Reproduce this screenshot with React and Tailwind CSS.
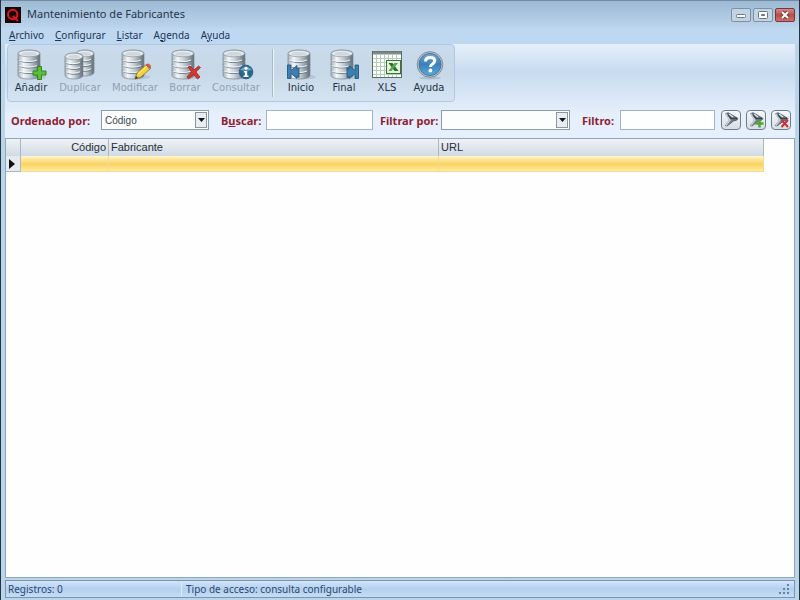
import React from "react";

function Cylinder({ x = 0, y = 0, w = 23, h = 29, id }) {
  const ry = 3.5;
  const step = (h - ry * 2) / 4;
  return (
    <g transform={`translate(${x} ${y})`}>
      <path
        d={`M0 ${ry} A${w / 2} ${ry} 0 0 1 ${w} ${ry} V${h - ry} A${w / 2} ${ry} 0 0 1 0 ${h - ry} Z`}
        fill={`url(#${id}-body)`}
        stroke="#7e8a93"
        strokeWidth="0.7"
      />
      {[1, 2, 3].map((n) => (
        <g key={n} fill="none">
          <path d={`M0 ${ry + step * n} A${w / 2} ${ry} 0 0 0 ${w} ${ry + step * n}`} stroke="#6f7c86" strokeWidth="1" />
          <path d={`M0.5 ${ry + step * n + 1} A${w / 2} ${ry} 0 0 0 ${w - 3} ${ry + step * n + 1}`} stroke="#f8fbfc" strokeWidth="0.9" />
        </g>
      ))}
      <ellipse cx={w / 2} cy={ry} rx={w / 2 - 0.3} ry={ry - 0.2} fill="#e9eef1" stroke="#87929a" strokeWidth="0.7" />
      <ellipse cx={w / 2} cy={ry + 0.3} rx={w / 2 - 3} ry={ry - 1.5} fill="#d0d8dd" />
    </g>
  );
}

function BodyGradient({ id }) {
  return (
    <defs>
      <linearGradient id={`${id}-body`}>
        <stop offset="0" stopColor="#a5b0b8" />
        <stop offset="0.25" stopColor="#f2f6f8" />
        <stop offset="0.5" stopColor="#cdd6dc" />
        <stop offset="0.75" stopColor="#98a5ae" />
        <stop offset="1" stopColor="#5f6c76" />
      </linearGradient>
    </defs>
  );
}

function DbIcon({ kind }) {
  const id = `db-${kind}`;
  return (
    <svg width="36" height="32" viewBox="0 0 36 32" aria-hidden="true">
      <BodyGradient id={id} />
      {kind === "copy" ? (
        <>
          <Cylinder x={14} y={1} w={18} h={26} id={id} />
          <Cylinder x={3} y={4} w={18} h={26} id={id} />
        </>
      ) : (
        <>
          <ellipse cx="20" cy="28" rx="13" ry="2.5" fill="#64788a" opacity="0.2" />
          <Cylinder x={5} y={1} w={22} h={29} id={id} />
        </>
      )}
      {kind === "add" && (
        <path d="M24.5 17.5h4v4.5h4.5v4h-4.5v4.5h-4v-4.5h-4.5v-4h4.5z" fill="#5cbd38" stroke="#2c8a1a" />
      )}
      {kind === "edit" && (
        <g>
          <path d="M18 30l2-6 10-9 4 4-10 9z" fill="#f3d33c" stroke="#8c7421" strokeWidth="0.8" />
          <path d="M28.5 16l2-1.5q3 0 3.5 3.5l-2 2z" fill="#cc5a50" />
          <path d="M21 25l9-8" stroke="#fff3a3" />
          <path d="M18 30l1-3 2 2z" fill="#333" />
        </g>
      )}
      {kind === "delete" && (
        <path d="M21 18l2-1 4 4 4.5-4 2 1.5-4.5 4.5 4 5-2.5 2-4-4.5-5 4.5-1.5-2 4.5-5z" fill="#d43830" stroke="#9d2020" strokeWidth="0.7" />
      )}
      {kind === "info" && (
        <g>
          <circle cx="28" cy="23" r="6.8" fill="#28688f" stroke="#2a6186" />
          <path d="M22 21q6-7 12 0q-6 1-12 0" fill="#6ba8ca" />
          <circle cx="28" cy="19.3" r="1.5" fill="#fff" />
          <path d="M25.8 22h3.4v4.5h1.3v1.5h-5v-1.5h1.4v-3h-1.1z" fill="#fff" />
        </g>
      )}
      {kind === "first" && (
        <path d="M4.5 16h3.5v5.5l6-5v4l2-2v10l-2-1v2l-6-5v5H4.5z" fill="#3d7fb1" stroke="#1c4f7a" strokeWidth="0.8" />
      )}
      {kind === "last" && (
        <path d="M32.5 16h-3.5v5.5l-6-5v4l-2-2v10l2-1v2l6-5v5h3.5z" fill="#3d7fb1" stroke="#1c4f7a" strokeWidth="0.8" />
      )}
    </svg>
  );
}

function XlsIcon() {
  return (
    <svg width="36" height="32" viewBox="0 0 36 32" aria-hidden="true">
      <rect x="3.5" y="2.5" width="29" height="26" fill="#fcfffb" stroke="#5c6d60" />
      <path d="M7.5 6v22M11.5 6v22M15.5 6v22M19.5 6v22M23.5 6v22M27.5 6v22M4 9.5h28M4 13.5h28M4 17.5h28M4 21.5h28M4 25.5h28" stroke="#b4cdb8" />
      <path d="M4 4h28" stroke="#7d8a87" strokeWidth="3" />
      <rect x="17.5" y="11.5" width="14" height="13" fill="#e5f2dc" stroke="#39703c" />
      <path d="M19.5 14h4l6 8h-4z" fill="#2b6d31" />
      <path d="M29 14h-3.500l-6 8h3z" fill="#56a451" />
    </svg>
  );
}

function HelpIcon() {
  return (
    <svg width="36" height="32" viewBox="0 0 36 32" aria-hidden="true">
      <defs>
        <linearGradient id="help-fill" x2="0" y2="1">
          <stop stopColor="#6fabd8" />
          <stop offset="0.5" stopColor="#3a80bd" />
          <stop offset="1" stopColor="#55aee2" />
        </linearGradient>
      </defs>
      <ellipse cx="19" cy="29" rx="11" ry="1.5" fill="#71808c" opacity="0.3" />
      <circle cx="19" cy="15.500" r="12.800" fill="#b9c5ce" stroke="#7c8b97" />
      <circle cx="19" cy="15.500" r="11" fill="url(#help-fill)" stroke="#4b7292" />
      <path d="M14.500 12.500q0-4 4.700-4 4.500 0 4.500 3.300 0 2-2.500 3.400-1.700 1-1.700 2.800" fill="none" stroke="#fff" strokeWidth="3" />
      <circle cx="19.400" cy="21.500" r="1.900" fill="#fff" />
    </svg>
  );
}

function FilterIcon({ kind }) {
  return (
    <svg width="18" height="18" viewBox="0 0 18 18" aria-hidden="true">
      <path d="M3.500 2.500q3-1.500 5 .5l7.500 4.500q-.5 2-4.500 2.500L5 15l-1.500-.5L7.500 9z" fill="#77828b" stroke="#48535d" strokeWidth="0.8" />
      <path d="M3.500 2.500l4.500 6.500-4 5.500" fill="none" stroke="#c9d1d6" strokeWidth="1.400" />
      <path d="M6 3.500l3 4 6 0" fill="none" stroke="#39434c" strokeWidth="1.300" />
      <path d="M7 3l4 3" stroke="#e6ebee" strokeWidth="1.200" />
      {kind === "add" && <path d="M12.500 8.500v8M8.500 12.500h8" stroke="#4ba832" strokeWidth="2.500" />}
      {kind === "remove" && <path d="M9.500 9l6.500 7M16 9l-6.500 7" stroke="#cb2d32" strokeWidth="2" />}
    </svg>
  );
}

const menus = [
  ["", "A", "rchivo"],
  ["", "C", "onfigurar"],
  ["", "L", "istar"],
  ["A", "g", "enda"],
  ["A", "y", "uda"],
];

function ToolButton({ label, width, disabled, children }) {
  return (
    <button type="button" disabled={disabled} className={`flex flex-col items-center ${width} ${disabled ? "text-[#92a0ae]" : "text-[#263445]"}`}>
      {children}
      <span>{label}</span>
    </button>
  );
}

function Combo({ id, width, value }) {
  return (
    <div className={`relative h-5 ${width}`}>
      <select id={id} defaultValue={value} className="block h-full w-full appearance-none border border-[#8c9bab] bg-[#fcfefe] pr-4 pl-[3px] font-['Liberation_Sans',sans-serif] text-[10px] text-[#394751]">
        <option value={value}>{value}</option>
      </select>
      <span className="pointer-events-none absolute top-0.5 right-0.5 flex h-4 w-3 items-center justify-center border border-[#8c969e] bg-[#e9edef]">
        <svg width="7" height="4" viewBox="0 0 7 4" aria-hidden="true"><path d="M0 0h7L3.5 4z" fill="#101820" /></svg>
      </span>
    </div>
  );
}

const labelStyle = "shrink-0 pt-0.5 text-[11px] font-bold text-[#8f1e35]";
const fieldStyle = "h-5 border border-[#a4b4c7] bg-[#fdfefe] px-1 text-[10px]";
const filterButton = "flex h-5 w-5 items-center justify-center rounded-sm border border-[#707d88] bg-linear-to-b from-[#f7f9fb] to-[#d5dde5]";
const headCell = "border-r border-[#aab7c5] font-normal";
const captionButton = "flex h-3.5 w-5 items-center justify-center rounded-xs border";

export default function App() {
  return (
    <div className="flex h-screen min-h-80 w-full flex-col overflow-hidden border-x border-[#26343e] bg-[#bad4e9] font-['Noto_Sans',sans-serif] text-[10px] text-[#26364c]">
      <header className="flex h-7 shrink-0 items-center gap-1 border-t border-[#758ba0] bg-linear-to-b from-[#9dbad4] to-[#bcd4ec] pr-1 pl-1">
        <svg width="16" height="16" viewBox="0 0 16 16" aria-hidden="true">
          <path fill="#160607" d="M0 0h16v16H0z" />
          <ellipse cx="7.7" cy="7.5" rx="4.7" ry="4.8" fill="none" stroke="#dd1721" strokeWidth="2" />
          <path d="M8 9l5 5" stroke="#dd1721" strokeWidth="2" />
        </svg>
        <h1 className="flex-1 pl-0.5 text-[11px]">Mantenimiento de Fabricantes</h1>
        <div className="flex gap-0.5">
          <button type="button" aria-label="Minimizar" className={`${captionButton} border-[#7d91a5] bg-[#c3d3e2]`}>
            <svg width="12" height="10" viewBox="0 0 12 10"><rect x="1.5" y="4.5" width="9" height="3" rx="1" fill="#fff" stroke="#667788" /></svg>
          </button>
          <button type="button" aria-label="Maximizar" className={`${captionButton} border-[#7d91a5] bg-[#c3d3e2]`}>
            <svg width="12" height="10" viewBox="0 0 12 10"><rect x="1.5" y="1.5" width="9" height="7" rx="1" fill="#fff" stroke="#667788" /><path d="M4.500 4.500h3v1h-3z" stroke="#667788" /></svg>
          </button>
          <button type="button" aria-label="Cerrar" className={`${captionButton} border-[#79363b] bg-linear-to-b from-[#d28c89] via-[#b84c46] to-[#c9736c]`}>
            <svg width="12" height="10" viewBox="0 0 12 10"><path d="M3 2l6 6M9 2L3 8" stroke="#74393c" strokeWidth="4" /><path d="M3 2l6 6M9 2L3 8" stroke="#fff" strokeWidth="2" /></svg>
          </button>
        </div>
      </header>

      <nav className="flex h-4 shrink-0 items-center gap-[11px] bg-[#bfd8f1] px-2 pb-0.5 text-[#243452]">
        {menus.map(([before, key, after]) => (
          <button key={before + key + after} type="button">{before}<u>{key}</u>{after}</button>
        ))}
      </nav>

      <main className="mx-1 flex min-h-0 flex-1 flex-col">
        <section className="shrink-0 bg-linear-to-b from-[#e5effb] via-[#c8dcf0] via-30% to-[#e6effc] to-75%">
          <div role="toolbar" aria-label="Registros" className="ml-0.5 flex h-[58px] w-fit items-start rounded-sm border border-[#b0c8df] bg-linear-to-b from-[#c9dbec] via-[#c7d8e8] to-[#d5e4f3] pt-1 pr-1 font-['DejaVu_Sans',sans-serif] leading-[14px]">
            <ToolButton label="Añadir" width="w-[46px]"><DbIcon kind="add" /></ToolButton>
            <ToolButton label="Duplicar" width="w-[52px]" disabled><DbIcon kind="copy" /></ToolButton>
            <ToolButton label="Modificar" width="w-[58px]" disabled><DbIcon kind="edit" /></ToolButton>
            <ToolButton label="Borrar" width="w-[42px]" disabled><DbIcon kind="delete" /></ToolButton>
            <ToolButton label="Consultar" width="w-[60px]" disabled><DbIcon kind="info" /></ToolButton>
            <span className="mx-1.5 h-12 w-0.5 border-l border-[#a7b9c8] bg-[#eff6fa]" />
            <ToolButton label="Inicio" width="w-[42px]"><DbIcon kind="first" /></ToolButton>
            <ToolButton label="Final" width="w-[44px]"><DbIcon kind="last" /></ToolButton>
            <ToolButton label="XLS" width="w-[42px]"><XlsIcon /></ToolButton>
            <ToolButton label="Ayuda" width="w-[42px]"><HelpIcon /></ToolButton>
          </div>
          <form className="flex h-9 items-center pl-1.5" onSubmit={(e) => e.preventDefault()}>
            <label htmlFor="orden" className={`${labelStyle} w-[90px]`}>Ordenado por:</label>
            <Combo id="orden" width="w-[108px]" value="Código" />
            <label htmlFor="buscar" className={`${labelStyle} ml-3 w-[45px]`}>B<u>u</u>scar:</label>
            <input id="buscar" type="text" className={`${fieldStyle} w-[107px]`} />
            <label htmlFor="campo" className={`${labelStyle} ml-[7px] w-[61px]`}>Filtrar por:</label>
            <Combo id="campo" width="w-[129px]" value="" />
            <label htmlFor="filtro" className={`${labelStyle} ml-3 w-[38px]`}>Filtro:</label>
            <input id="filtro" type="text" className={`${fieldStyle} w-[95px]`} />
            <div className="ml-1.5 flex gap-[5px]">
              <button type="button" aria-label="Filtrar" className={filterButton}><FilterIcon /></button>
              <button type="button" aria-label="Añadir filtro" className={filterButton}><FilterIcon kind="add" /></button>
              <button type="button" aria-label="Quitar filtro" className={filterButton}><FilterIcon kind="remove" /></button>
            </div>
          </form>
        </section>

        <section className="min-h-0 flex-1 overflow-hidden border border-[#91a6bd] bg-[#fefefe]">
          <table className="w-[calc(100%-30px)] table-fixed border-separate border-spacing-0 font-['Liberation_Sans',sans-serif] text-[11px] text-[#252e38]">
            <colgroup>
              <col className="w-[15px]" />
              <col className="w-[88px]" />
              <col className="w-[330px]" />
              <col />
            </colgroup>
            <thead>
              <tr className="h-[17px] bg-linear-to-b from-[#eff3f5] to-[#d1dae5]">
                <th className={headCell} aria-label="Fila actual" />
                <th className={`${headCell} pr-0.5 text-right`}>Código</th>
                <th className={`${headCell} pl-0.5 text-left`}>Fabricante</th>
                <th className={`${headCell} pl-0.5 text-left`}>URL</th>
              </tr>
            </thead>
            <tbody>
              <tr className="h-4 bg-linear-to-b from-[#fff5c8] via-[#fad35f] to-[#ffeda6]">
                <td className="border-r border-b border-[#aab7c5] bg-[#e4eaf0]">
                  <svg className="ml-0.5" width="8" height="10" viewBox="0 0 8 10" aria-hidden="true"><path d="M1 0l6 5-6 5z" fill="#111" /></svg>
                </td>
                <td className="border-r border-b border-[#f3dc93]" />
                <td className="border-r border-b border-[#f3dc93]" />
                <td className="border-r border-b border-[#f3dc93]" />
              </tr>
            </tbody>
          </table>
        </section>
      </main>

      <footer className="mx-1 mt-0.5 mb-0.5 flex h-[18px] shrink-0 items-center border border-[#7896b3] bg-linear-to-b from-[#d3e5f8] via-[#b4d0ee] to-[#c5dcf3] text-[#2a4872]">
        <span className="w-[176px] border-r border-[#dceafa] pl-0.5">Registros: 0</span>
        <span className="flex-1 pl-1">Tipo de acceso: consulta configurable</span>
        <svg className="mr-1" width="12" height="12" viewBox="0 0 12 12" aria-hidden="true">
          <path d="M9 1h2v2H9zM5 5h2v2H5zM9 5h2v2H9zM1 9h2v2H1zM5 9h2v2H5zM9 9h2v2H9z" fill="#5e82aa" />
        </svg>
      </footer>
    </div>
  );
}
